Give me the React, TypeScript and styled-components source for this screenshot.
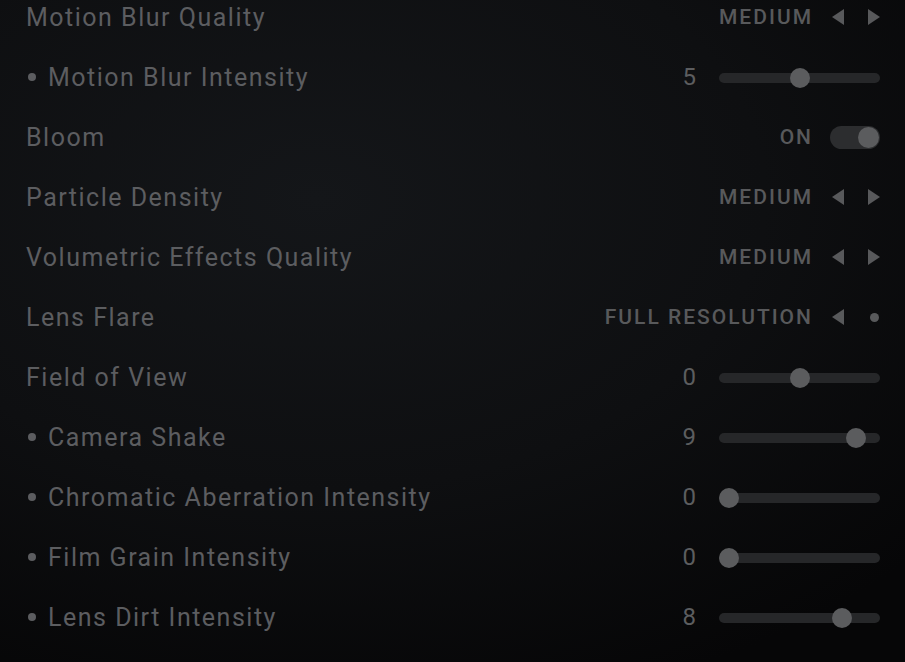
import styled, { createGlobalStyle } from 'styled-components';

const GlobalStyle = createGlobalStyle`
  html, body {
    margin: 0;
    padding: 0;
    background: #0b0c0e;
  }
  body {
    font-family: Roboto, 'Liberation Sans', sans-serif;
  }
`;

const Screen = styled.div`
  width: 905px;
  height: 662px;
  overflow: hidden;
  background: radial-gradient(ellipse 90% 80% at 35% 30%, #141619 0%, #0e0f11 55%, #060607 100%);
`;

const List = styled.div`
  display: flex;
  flex-direction: column;
  margin-top: -13px;
  padding: 0 25px 0 26px;
`;

const Row = styled.div`
  height: 60px;
  display: flex;
  align-items: center;
  justify-content: space-between;
`;

const Label = styled.div<{ sub?: boolean }>`
  display: flex;
  align-items: center;
  font-size: 25px;
  letter-spacing: 1.5px;
  color: #5c5d60;
  padding-left: ${(p) => (p.sub ? '2px' : '0')};
`;

const Bullet = styled.span`
  width: 8px;
  height: 8px;
  border-radius: 50%;
  background: #5c5d60;
  margin-right: 12px;
`;

const Control = styled.div`
  display: flex;
  align-items: center;
`;

const ValueText = styled.div<{ gap?: number }>`
  font-size: 21px;
  font-weight: 500;
  letter-spacing: 2px;
  color: #58595b;
  margin-right: ${(p) => p.gap ?? 19}px;
`;

const Arrows = styled.div`
  display: flex;
  align-items: center;
  gap: 24px;
`;

const Arrow = styled.span<{ dir: 'left' | 'right' }>`
  width: 0;
  height: 0;
  border-top: 8.5px solid transparent;
  border-bottom: 8.5px solid transparent;
  ${(p) =>
    p.dir === 'left'
      ? 'border-right: 12px solid #58595b;'
      : 'border-left: 12px solid #58595b;'}
`;

const DotSlot = styled.span`
  width: 12px;
  display: flex;
  justify-content: center;
  &::after {
    content: '';
    width: 9px;
    height: 9px;
    border-radius: 50%;
    background: #58595b;
  }
`;

const Number = styled.div`
  font-size: 24px;
  color: #5c5d5f;
  margin-right: 23px;
  text-align: right;
`;

const Track = styled.div`
  position: relative;
  width: 161px;
  height: 10px;
  margin-top: 2px;
  border-radius: 5px;
  background: #262729;
`;

const Knob = styled.span`
  position: absolute;
  top: 50%;
  width: 20px;
  height: 20px;
  margin: -10px 0 0 -10px;
  border-radius: 50%;
  background: #5b5c5e;
`;

const Switch = styled.div`
  width: 50px;
  height: 23px;
  border-radius: 12px;
  background: #2c2d2f;
  display: flex;
  align-items: center;
  justify-content: flex-end;
  padding-right: 1px;
  box-sizing: border-box;
  &::after {
    content: '';
    width: 21px;
    height: 21px;
    border-radius: 50%;
    background: #5b5c5e;
  }
`;

type Setting =
  | { label: string; sub?: boolean; kind: 'select'; value: string; last?: boolean }
  | { label: string; sub?: boolean; kind: 'slider'; value: number; pos: number }
  | { label: string; sub?: boolean; kind: 'toggle'; value: string };

const settings: Setting[] = [
  { label: 'Motion Blur Quality', kind: 'select', value: 'MEDIUM' },
  { label: 'Motion Blur Intensity', sub: true, kind: 'slider', value: 5, pos: 0.5 },
  { label: 'Bloom', kind: 'toggle', value: 'ON' },
  { label: 'Particle Density', kind: 'select', value: 'MEDIUM' },
  { label: 'Volumetric Effects Quality', kind: 'select', value: 'MEDIUM' },
  { label: 'Lens Flare', kind: 'select', value: 'FULL RESOLUTION', last: true },
  { label: 'Field of View', kind: 'slider', value: 0, pos: 0.5 },
  { label: 'Camera Shake', sub: true, kind: 'slider', value: 9, pos: 0.9 },
  { label: 'Chromatic Aberration Intensity', sub: true, kind: 'slider', value: 0, pos: 0 },
  { label: 'Film Grain Intensity', sub: true, kind: 'slider', value: 0, pos: 0 },
  { label: 'Lens Dirt Intensity', sub: true, kind: 'slider', value: 8, pos: 0.8 },
];

function renderControl(s: Setting) {
  if (s.kind === 'select') {
    return (
      <Control>
        <ValueText>{s.value}</ValueText>
        <Arrows>
          <Arrow dir="left" />
          {s.last ? <DotSlot /> : <Arrow dir="right" />}
        </Arrows>
      </Control>
    );
  }
  if (s.kind === 'toggle') {
    return (
      <Control>
        <ValueText gap={17}>{s.value}</ValueText>
        <Switch />
      </Control>
    );
  }
  return (
    <Control>
      <Number>{s.value}</Number>
      <Track>
        <Knob style={{ left: 10 + s.pos * 141 }} />
      </Track>
    </Control>
  );
}

export default function App() {
  return (
    <>
      <GlobalStyle />
      <Screen>
        <List>
          {settings.map((s) => (
            <Row key={s.label}>
              <Label sub={s.sub}>
                {s.sub && <Bullet />}
                {s.label}
              </Label>
              {renderControl(s)}
            </Row>
          ))}
        </List>
      </Screen>
    </>
  );
}
